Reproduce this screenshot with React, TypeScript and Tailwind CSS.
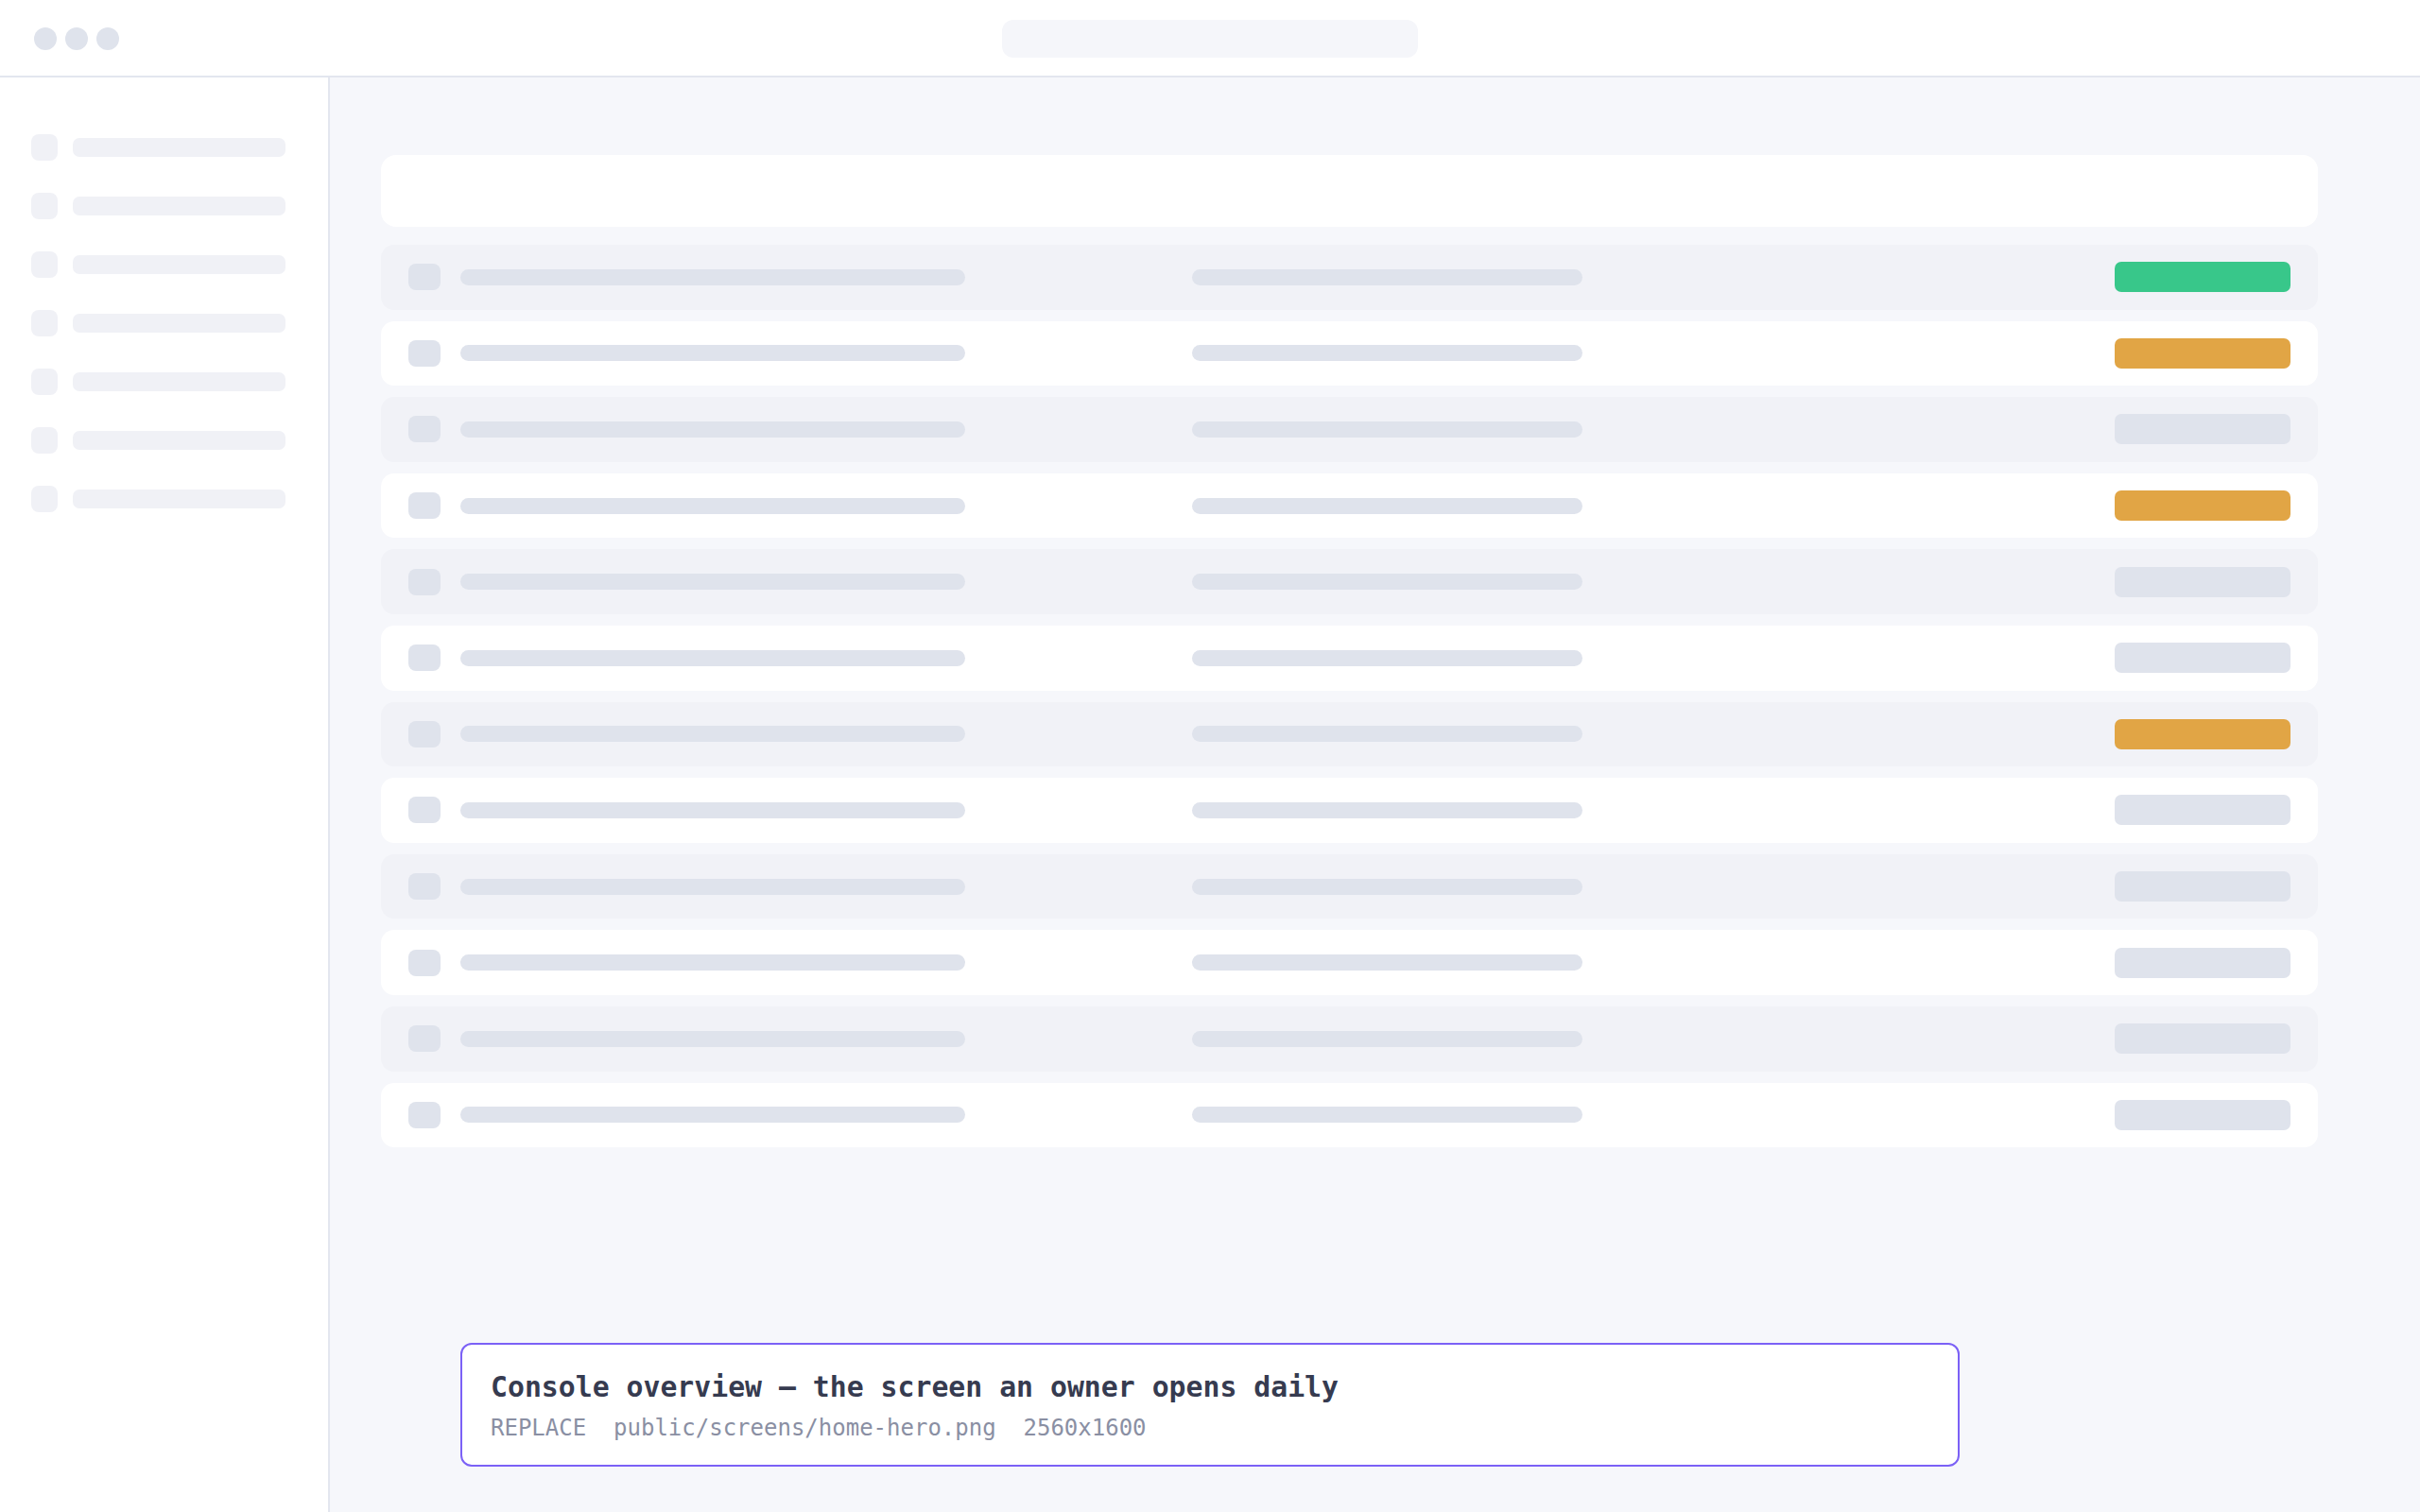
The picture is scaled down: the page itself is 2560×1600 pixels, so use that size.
import React from "react";

type Status = "ok" | "warn" | "idle";

const rows: Status[] = [
  "ok",
  "warn",
  "idle",
  "warn",
  "idle",
  "idle",
  "warn",
  "idle",
  "idle",
  "idle",
  "idle",
  "idle",
];

const badgeClass: Record<Status, string> = {
  ok: "bg-[#38c78a]",
  warn: "bg-[#e1a545]",
  idle: "bg-[#dfe3ec]",
};

const TopBar: React.FC = () => (
  <header className="h-[82px] shrink-0 bg-white border-b-2 border-[#e3e6ef] pt-[2px] grid grid-cols-[1fr_auto_1fr] items-center">
    <div className="flex items-center gap-[9px] pl-[36px]">
      <span className="w-[24px] h-[24px] rounded-full bg-[#dfe3ec]" />
      <span className="w-[24px] h-[24px] rounded-full bg-[#dfe3ec]" />
      <span className="w-[24px] h-[24px] rounded-full bg-[#dfe3ec]" />
    </div>
    <div className="w-[440px] h-[40px] rounded-[12px] bg-[#f5f6fa]" />
    <div />
  </header>
);

const Sidebar: React.FC = () => (
  <aside className="w-[349px] shrink-0 bg-white border-r-2 border-[#e3e6ef] pt-[60px] pl-[33px] flex flex-col gap-[34px]">
    {Array.from({ length: 7 }).map((_, i) => (
      <div key={i} className="flex items-center gap-[16px] h-[28px]">
        <span className="w-[28px] h-[28px] rounded-[8px] bg-[#f0f1f6]" />
        <span className="w-[225px] h-[20px] rounded-[7px] bg-[#f0f1f6]" />
      </div>
    ))}
  </aside>
);

const Row: React.FC<{ status: Status; striped: boolean }> = ({ status, striped }) => (
  <div
    className={`h-[68.6px] rounded-[14px] flex items-center pl-[29px] pr-[29px] ${
      striped ? "bg-[#f1f2f7]" : "bg-white"
    }`}
  >
    <span className="w-[34px] h-[28px] rounded-[8px] bg-[#dfe3ec]" />
    <span className="ml-[21px] w-[534px] h-[17px] rounded-full bg-[#dfe3ec]" />
    <span className="ml-[240px] w-[413px] h-[17px] rounded-full bg-[#dfe3ec]" />
    <span className="flex-1" />
    <span className={`w-[186px] h-[32px] rounded-[7px] ${badgeClass[status]}`} />
  </div>
);

export default function App() {
  return (
    <div className="relative w-[2560px] h-[1600px] flex flex-col bg-white font-['DejaVu_Sans_Mono',monospace] overflow-hidden">
      <TopBar />
      <div className="flex flex-1 min-h-0">
        <Sidebar />
        <main className="flex-1 bg-[#f6f7fb] pt-[82px] pl-[54px]">
          <div className="w-[2049px] flex flex-col">
            <div className="h-[76px] rounded-[16px] bg-white" />
            <div className="mt-[19px] flex flex-col gap-[12px]">
              {rows.map((s, i) => (
                <Row key={i} status={s} striped={i % 2 === 0} />
              ))}
            </div>
          </div>
        </main>
      </div>

      {/* placeholder caption over the shot */}
      <div className="absolute left-[487px] top-[1421px] w-[1586px] h-[131px] rounded-[12px] border-2 border-[#7b61f6] bg-white pl-[30px] pt-[27px]">
        <div className="text-[29.8px] leading-[36px] font-bold text-[#363b50] whitespace-pre">
          Console overview — the screen an owner opens daily
        </div>
        <div className="mt-[9px] text-[24px] leading-[32px] text-[#8a8fa3] whitespace-pre">
          REPLACE  public/screens/home-hero.png  2560x1600
        </div>
      </div>
    </div>
  );
}
